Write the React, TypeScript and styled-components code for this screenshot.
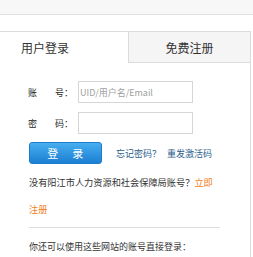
import React from "react";
import styled, { createGlobalStyle } from "styled-components";

const Global = createGlobalStyle`
  html, body { margin: 0; padding: 0; background: #fff; }
  body { font-family: "Noto Sans CJK SC", "Noto Sans", sans-serif; color: #333; }
  * { box-sizing: border-box; }
`;

const Page = styled.div`
  width: 253px;
  height: 257px;
  overflow: hidden;
  background: #fff;
`;

const TopBand = styled.div`
  height: 15px;
  background: #f7f7f7;
  border-bottom: 1px solid #e2e2e2;
`;

const Panel = styled.div`
  margin-top: 16px;
  width: 251px;
  border-top: 1px solid #dcdcdc;
  border-right: 1px solid #dcdcdc;
  height: 230px;
`;

const Tabs = styled.div`
  display: grid;
  grid-template-columns: 128px 1fr;
  height: 31px;
`;

const Tab = styled.div<{ $active?: boolean }>`
  display: flex;
  align-items: center;
  justify-content: ${(p) => (p.$active ? "flex-start" : "center")};
  padding-left: ${(p) => (p.$active ? "21px" : "0")};
  font-size: 12px;
  color: #333;
  background: ${(p) => (p.$active ? "#fff" : "#f5f5f5")};
  border-left: ${(p) => (p.$active ? "none" : "1px solid #dcdcdc")};
  border-bottom: ${(p) => (p.$active ? "none" : "1px solid #dcdcdc")};
`;

const Body = styled.div`
  padding: 18px 0 0 29px;
`;

const FormRow = styled.div`
  display: flex;
  align-items: center;
  height: 22px;
  margin-bottom: 9px;
`;

const Label = styled.span`
  width: 50px;
  margin-left: -1px;
  font-size: 9px;
  font-weight: normal;
  color: #1e1e1e;
  white-space: pre;
`;

const Input = styled.input`
  width: 115px;
  height: 22px;
  border: 1px solid #d6d6d6;
  padding: 0 1px;
  font-family: inherit;
  font-size: 9px;
  color: #333;
  outline: none;
  &::placeholder { color: #a0a0a0; }
`;

const ActionRow = styled.div`
  display: flex;
  align-items: center;
  margin-top: -1px;
`;

const LoginButton = styled.button`
  width: 73px;
  height: 22px;
  border: 1px solid #1f7ccc;
  border-radius: 3px;
  background: linear-gradient(#47aef0, #1c7fd2);
  color: #fff;
  font-family: inherit;
  font-size: 11px;
  letter-spacing: 1.5px;
  padding: 0 0 0 1px;
  margin-right: 14px;
  white-space: pre;
  cursor: pointer;
`;

const Link = styled.a<{ $gap?: boolean }>`
  font-size: 9px;
  color: #2a5d8c;
  text-decoration: none;
  margin-right: ${(p) => (p.$gap ? "6px" : "0")};
`;

const Para = styled.p`
  margin: 5px 0 0;
  width: 190px;
  font-size: 9.2px;
  line-height: 27px;
  color: #333;
`;

const Orange = styled.a`
  color: #f07d1c;
  text-decoration: none;
`;

const Divider = styled.hr`
  margin: 4px 0 0;
  width: 191px;
  border: none;
  border-top: 1px solid #dedede;
`;

const Note = styled.p`
  margin: 5px 0 0;
  font-size: 9px;
  line-height: 27px;
  color: #333;
`;

export default function App() {
  return (
    <Page>
      <Global />
      <TopBand />
      <Panel>
        <Tabs>
          <Tab $active>用户登录</Tab>
          <Tab>免费注册</Tab>
        </Tabs>
        <Body>
          <FormRow>
            <Label>{"账\u3000\u3000号："}</Label>
            <Input placeholder="UID/用户名/Email" />
          </FormRow>
          <FormRow>
            <Label>{"密\u3000\u3000码："}</Label>
            <Input type="password" />
          </FormRow>
          <ActionRow>
            <LoginButton>{"登\u3000录"}</LoginButton>
            <Link $gap href="#">忘记密码？</Link>
            <Link href="#">重发激活码</Link>
          </ActionRow>
          <Para>
            没有阳江市人力资源和社会保障局账号？<Orange href="#">立即</Orange>
            <Orange href="#">注册</Orange>
          </Para>
          <Divider />
          <Note>你还可以使用这些网站的账号直接登录：</Note>
        </Body>
      </Panel>
    </Page>
  );
}
